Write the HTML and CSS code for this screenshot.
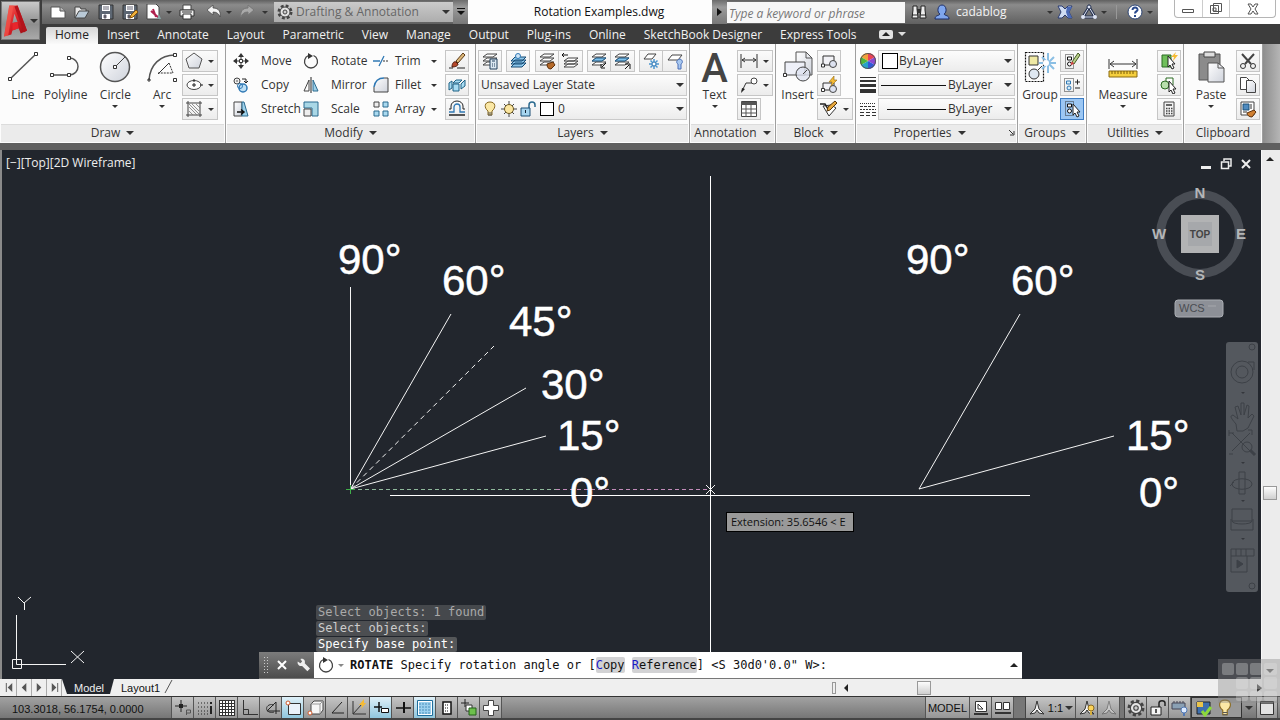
FILE: index.html
```html
<!DOCTYPE html>
<html lang="en">
<head>
  <meta charset="UTF-8" />
  <meta name="viewport" content="width=device-width, initial-scale=1.0"/>
  <title>Rotation Examples.dwg</title>
  <link rel="stylesheet" href="styles.css">
</head>

<body>
  <!-- icon sprite -->
  <svg class="sprite" aria-hidden="true">
    <defs>
      <linearGradient id="g-paper" x1="0" y1="0" x2="1" y2="1"><stop offset="0" stop-color="#fff"/><stop offset="1" stop-color="#cfd3dc"/></linearGradient>
      <linearGradient id="g-red" x1="0" y1="0" x2="1" y2="1"><stop offset="0" stop-color="#ff6a5c"/><stop offset=".5" stop-color="#d81f26"/><stop offset="1" stop-color="#8d0d14"/></linearGradient>
    </defs>
    <symbol id="i-logo" viewBox="0 0 24 32"><path d="M6 1h8l9 24-6 3-2-5-6 2-1 4-7 2zM11 9l-2 9 5-1z" fill="url(#g-red)" fill-rule="evenodd"/><path d="M14 1l9 24-3 2L11 2z" fill="#b3131b"/><path d="M6 1h4L5 30l-4 1z" fill="#f4574c" opacity=".7"/><path d="M9 18l5-1 1 6-6 2z" fill="#e8262c"/></symbol>
    <symbol id="i-new" viewBox="0 0 16 16"><path d="M1 3h9l5 4v7H1z" fill="#fff" stroke="#555"/><path d="M10 3v4h5" fill="#bbb" stroke="#555"/></symbol>
    <symbol id="i-open" viewBox="0 0 16 16"><path d="M1 14V3h5l1 2h5v3" fill="#e8e8e8" stroke="#444"/><path d="M1 14l4-7h10l-4 7z" fill="#b9c9d6" stroke="#444"/></symbol>
    <symbol id="i-save" viewBox="0 0 16 16"><path d="M1 1h14v14H1z" fill="#5d6773" stroke="#333"/><path d="M4 1h8v6H4zM4 10h8v5H4z" fill="#fff"/><path d="M5 3h6M5 5h6M6 11h2v3H6z" stroke="#667" fill="#555"/></symbol>
    <symbol id="i-saveas" viewBox="0 0 16 16"><use href="#i-save"/><path d="M8 14l1-3 5-5 2 2-5 5z" fill="#efb23c" stroke="#85530c"/></symbol>
    <symbol id="i-sheet" viewBox="0 0 16 16"><path d="M1 0h9l3 3v12H1z" fill="#fff" stroke="#444"/><path d="M5 7l8 7M7 5l3 8" stroke="#b0224e" stroke-width="2"/><path d="M13 10l2 5h-4z" fill="#8aa"/></symbol>
    <symbol id="i-print" viewBox="0 0 16 16"><path d="M4 1h8v5H4z" fill="#fff" stroke="#444"/><path d="M1 6h14v6H1z" fill="#eee" stroke="#333"/><path d="M4 10h8v5H4z" fill="#fff" stroke="#333"/><path d="M3 8h10" stroke="#333"/></symbol>
    <symbol id="i-undo" viewBox="0 0 16 16"><path d="M1 6l6-5v3c6 0 8 4 7 9-1-3-3-5-7-5v3z" fill="#f4f4f4" stroke="#444" stroke-width=".7"/></symbol>
    <symbol id="i-redo" viewBox="0 0 16 16"><path d="M15 6L9 1v3c-6 0-8 4-7 9 1-3 3-5 7-5v3z" fill="#aaa" stroke="#777"/></symbol>
    <symbol id="i-gear" viewBox="0 0 16 16"><circle cx="8" cy="8" r="6" fill="none" stroke="#444" stroke-width="3" stroke-dasharray="2.7 2"/><circle cx="8" cy="8" r="5" fill="#e4e4e4" stroke="#444"/><circle cx="8" cy="8" r="2" fill="#ccc" stroke="#444"/></symbol>
    <symbol id="i-binoc" viewBox="0 0 16 16"><path d="M2 2h4v3l1 9H1l1-8zM10 2h4v4l1 8H9l1-9z" fill="#eee" stroke="#222"/><path d="M6 5h4v4H6z" fill="#333"/><path d="M1 11h5M10 11h5" stroke="#222"/></symbol>
    <symbol id="i-user" viewBox="0 0 16 16"><path d="M8 1c5 0 5 8 2 9 1 2 5 1 5 5H1c0-4 4-3 5-5C3 9 3 1 8 1z" fill="#7fa6ee" stroke="#1c2d66"/></symbol>
    <symbol id="i-exch" viewBox="0 0 16 16"><path d="M1 2h4l3 3 3-3h4l-3 6 3 6h-4l-3-3-3 3H1l3-6z" fill="#cfdcf2" stroke="#2b3c72"/><path d="M10 3h5l-3 5 3 6h-4L9 8z" fill="#4a69b5"/></symbol>
    <symbol id="i-a360" viewBox="0 0 16 16"><path d="M8 3L2 13h12z" fill="none" stroke="#273352" stroke-width="3"/><path d="M8 3L2 13h12z" fill="none" stroke="#dfe6f5"/><circle cx="8" cy="3" r="2" fill="#dfe6f5" stroke="#273352"/><circle cx="2" cy="13" r="2" fill="#dfe6f5"/><circle cx="14" cy="13" r="2" fill="#dfe6f5"/></symbol>
    <symbol id="i-help" viewBox="0 0 16 16"><circle cx="8" cy="8" r="7" fill="#fff" stroke="#2a4272"/><path d="M5.500 6c0-3.500 5.500-3 5 0-.3 1.500-2.500 1.500-2.500 3.500M8 11v2" fill="none" stroke="#2a4a8e" stroke-width="2"/></symbol>
    <!-- draw -->
    <symbol id="i-line" viewBox="0 0 32 32"><path d="M3 28L29 3" stroke="#555" stroke-width="1.500"/><path d="M1.500 26.500h3v3h-3zM27.500 1.500h3v3h-3z" fill="#fff" stroke="#333"/></symbol>
    <symbol id="i-pline" viewBox="0 0 32 32"><path d="M2 24h17c12 0 12-17 0-17" fill="none" stroke="#555" stroke-width="1.500"/><path d="M.500 22.500h3v3h-3zM17.500 22.500h3v3h-3zM17.500 5.500h3v3h-3z" fill="#fff" stroke="#333"/></symbol>
    <symbol id="i-circle" viewBox="0 0 32 32"><circle cx="16" cy="16" r="14.500" fill="url(#g-paper)" stroke="#555" stroke-width="1.500"/><path d="M16 16L26 6" stroke="#444"/><path d="M14.500 14.500h3v3h-3z" fill="#fff" stroke="#333"/></symbol>
    <symbol id="i-arc" viewBox="0 0 32 32"><path d="M3 29C4 14 14 4 29 4" fill="none" stroke="#555" stroke-width="1.500"/><path d="M27.500 2.500h3v3h-3zM27.500 27.500h3v3h-3z" fill="#fff" stroke="#333"/><path d="M1 29h4M3 27v4M12 23l11-11" stroke="#333"/><path d="M23 12l4 10H12" fill="none" stroke="#333" stroke-dasharray="2 1"/></symbol>
    <symbol id="i-poly" viewBox="0 0 18 18"><path d="M9 1l8 6-3 9H4L1 7z" fill="url(#g-paper)" stroke="#555"/></symbol>
    <symbol id="i-ellipse" viewBox="0 0 18 18"><ellipse cx="9" cy="9" rx="7" ry="4.500" fill="#fff" stroke="#444"/><path d="M9 7v4M7 9h4M9 3v3M15 9h3" stroke="#222"/></symbol>
    <symbol id="i-hatch" viewBox="0 0 18 18"><path d="M3 1v16M15 1v16M1 3h16M1 15h16" stroke="#444"/><path d="M4 7l8 8M4 4l10 10M7 4l7 7M11 4l4 4M4 11l4 4" stroke="#777" stroke-width=".8"/></symbol>
    <!-- modify -->
    <symbol id="i-move" viewBox="0 0 16 16"><path d="M8 0l3 4H5zM8 16l3-4H5zM0 8l4-3v6zM16 8l-4-3v6z" fill="#333"/><path d="M6.500 6.500h3v3h-3z" fill="#fff" stroke="#333"/><path d="M3 8h3M10 8h3M8 3v3M8 10v3" stroke="#333"/></symbol>
    <symbol id="i-copy" viewBox="0 0 16 16"><circle cx="4" cy="4" r="3" fill="#eee" stroke="#444"/><circle cx="4" cy="4" r="1" fill="#888"/><path d="M9 2h4v3M11 4l2 2 2-2" fill="none" stroke="#222"/><circle cx="10" cy="11" r="4" fill="#bfe0f5" stroke="#2f78b4" stroke-width="1.500"/><circle cx="7" cy="9" r="2.500" fill="none" stroke="#2f78b4"/></symbol>
    <symbol id="i-stretch" viewBox="0 0 16 16"><path d="M1 1h8v14H1z" fill="url(#g-paper)" stroke="#444"/><path d="M9 1h2l4 14H9z" fill="#9ed1ea" stroke="#2b6a8f"/><path d="M4 11h6M8 8.500l3 2.500-3 2.500" fill="none" stroke="#111" stroke-width="1.500"/></symbol>
    <symbol id="i-rotate" viewBox="0 0 16 16"><path d="M10.500 2.500A6.500 6.500 0 1 1 5.500 2.500" fill="none" stroke="#444" stroke-width="1.300"/><path d="M5 0l5 3-5 3z" fill="#333"/></symbol>
    <symbol id="i-mirror" viewBox="0 0 16 16"><path d="M6 3v11H1z" fill="#fff" stroke="#444"/><path d="M10 3v11h5z" fill="#9ed1ea" stroke="#2b6a8f"/><path d="M8 0v16" stroke="#222"/></symbol>
    <symbol id="i-scale" viewBox="0 0 16 16"><path d="M1 1h14v14h-6V7H1z" fill="#a9d7e6" stroke="#2b6a8f"/><path d="M1 8h7v7H1z" fill="#eee" stroke="#444"/></symbol>
    <symbol id="i-trim" viewBox="0 0 16 16"><path d="M0 8h7M6 13L11 3" stroke="#2f78b4" stroke-width="1.300"/><path d="M10 8h6" stroke="#333" stroke-dasharray="2 1"/></symbol>
    <symbol id="i-fillet" viewBox="0 0 16 16"><path d="M1 15C1 6 6 1 15 1v14z" fill="url(#g-paper)"/><path d="M1 10C2 4 6 1 11 1" fill="none" stroke="#2f78b4" stroke-width="1.500"/><path d="M11 1h4v14H1v-5" fill="none" stroke="#444"/></symbol>
    <symbol id="i-array" viewBox="0 0 16 16"><path d="M1 1h5v5H1z" fill="#eee" stroke="#444"/><path d="M10 1h5v5h-5zM1 10h5v5H1zM10 10h5v5h-5z" fill="#aadaf0" stroke="#2b6a8f"/></symbol>
    <symbol id="i-erase" viewBox="0 0 18 18"><path d="M1 16h4M9 16h8" stroke="#222"/><path d="M8 9l7-8 2 2-7 8z" fill="#dcb87a" stroke="#5c3a16"/><path d="M4 15c0-4 2-6 4-5l2 2c0 2-3 3-6 3z" fill="#b5472a" stroke="#4a1a0d"/></symbol>
    <symbol id="i-explode" viewBox="0 0 18 18"><path d="M5 7l3-3h6l-3 3zM5 8h6v7H5zM13 8l4-4v6l-4 3zM1 7l3-2v7l-3 2z" fill="#a9dcf2" stroke="#1c6084"/></symbol>
    <symbol id="i-offset" viewBox="0 0 18 18"><path d="M1 12h5V7a3 3 0 0 1 6 0v5h5" fill="none" stroke="#2f78b4" stroke-width="1.300"/><path d="M1 9h2V6a6 5 0 0 1 12 0v3h2" fill="none" stroke="#222"/><path d="M1 15h16" stroke="#222" stroke-width="1.500"/></symbol>
    <!-- layers -->
    <symbol id="i-layer" viewBox="0 0 18 18"><path d="M6 2h10l-4 3H2zM6 6h10l-4 3H2zM6 10h10l-4 3H2z" fill="#fff" stroke="#444"/></symbol>
    <symbol id="i-layprop" viewBox="0 0 18 18"><use href="#i-layer"/><path d="M9 7h7v10H9z" fill="#dce8f2" stroke="#23415c"/><path d="M11 9h3M11 12h1M13 12h1M11 14h1M13 14h1" stroke="#23415c"/></symbol>
    <symbol id="i-layblue" viewBox="0 0 18 18"><path d="M6 11h11l-4 4H2zM6 8h11l-4 4H2zM6 5h11l-4 4H2z" fill="#8cc6ea" stroke="#174b74"/><circle cx="9" cy="4" r="2.500" fill="#cfe6f8" stroke="#2f78b4"/></symbol>
    <symbol id="i-laymatch" viewBox="0 0 18 18"><use href="#i-layer"/><path d="M9 12l6-2 2 3-4 4c-3 0-4-2-4-5z" fill="#b56a2a" stroke="#5d300c"/></symbol>
    <symbol id="i-layprev" viewBox="0 0 18 18"><path d="M7 6h10l-4 3H3zM7 9h10l-4 3H3zM7 12h10l-4 3H3z" fill="#fff" stroke="#444"/><path d="M7 3H1l2-2M1 3l2 2" fill="none" stroke="#111"/></symbol>
    <symbol id="i-layiso" viewBox="0 0 18 18"><use href="#i-layer"/><path d="M6 6h10l-4 3H2z" fill="#7fc2ec" stroke="#225a86"/><path d="M16 11l-4 4M11 12v4h4" stroke="#111" fill="none"/></symbol>
    <symbol id="i-layuni" viewBox="0 0 18 18"><use href="#i-layer"/><path d="M6 6h10l-4 3H2z" fill="#7fc2ec" stroke="#225a86"/><path d="M12 17l4-4M12 12h5v5" stroke="#111" fill="none"/></symbol>
    <symbol id="i-layfrz" viewBox="0 0 18 18"><path d="M6 2h8l-4 5H2z" fill="#fff" stroke="#444"/><path d="M12 7v10M7 12h10M8.500 8.500l7 7M15.500 8.500l-7 7" stroke="#4c96d0" stroke-width="1.500"/><circle cx="12" cy="12" r="2" fill="#fff" stroke="#2f78b4"/></symbol>
    <symbol id="i-layoff" viewBox="0 0 18 18"><path d="M6 3h10l-4 5H2z" fill="#fff" stroke="#444"/><path d="M14 7c3 1 3 4 1 5v5h-3v-5c-2-1-2-4 2-5z" fill="#a8c8f0" stroke="#4a6fb8"/></symbol>
    <symbol id="i-bulb" viewBox="0 0 16 16"><path d="M8 1c6 0 6 6 2 9v4H6v-4C2 7 2 1 8 1z" fill="#fbe8a6" stroke="#8a6a20"/><path d="M6 12h4M6 14h4" stroke="#555"/></symbol>
    <symbol id="i-sun" viewBox="0 0 16 16"><path d="M8 0v16M0 8h16M3 3l10 10M13 3L3 13" stroke="#444"/><circle cx="8" cy="8" r="4.500" fill="#fbe6a0" stroke="#6d5a20"/></symbol>
    <symbol id="i-unlock" viewBox="0 0 16 16"><path d="M9 8V4c0-4 6-4 6 0v2" fill="none" stroke="#2b6a8f" stroke-width="1.500"/><path d="M1 7h9v8H1z" fill="#a6d5ef" stroke="#1c4f74"/><path d="M5.500 9v3" stroke="#123"/></symbol>
    <!-- annotation, block -->
    <symbol id="i-dim" viewBox="0 0 18 18"><path d="M1 2v14M17 2v14M2 8h14M5 6L2 8l3 2M13 6l3 2-3 2" fill="none" stroke="#333"/></symbol>
    <symbol id="i-leader" viewBox="0 0 18 18"><path d="M2 15L6 7h6" fill="none" stroke="#333"/><circle cx="14" cy="5" r="3" fill="#fff" stroke="#444"/><path d="M1 17l1-5 3 1z" fill="#222"/></symbol>
    <symbol id="i-table" viewBox="0 0 18 18"><path d="M1.500 1.500h15v15h-15z" fill="#fff" stroke="#444"/><path d="M1 2h16v3H1z" fill="#555"/><path d="M1 9h16M1 13h16M6 5v12M11 5v12" stroke="#555"/></symbol>
    <symbol id="i-insert" viewBox="0 0 32 32"><path d="M14 1h10l6 6v17H14z" fill="url(#g-paper)" stroke="#555"/><path d="M24 1v6h6" fill="none" stroke="#555"/><path d="M3 11h20v13H3z" fill="#eef0f8" stroke="#444"/><circle cx="21" cy="23" r="7" fill="#dde2f0" fill-opacity=".8" stroke="#444"/><path d="M21 23l4-4" stroke="#444"/><path d="M1.500 22.500h3v3h-3z" fill="#fff" stroke="#333"/></symbol>
    <symbol id="i-block" viewBox="0 0 18 18"><path d="M3 4h11v9H3z" fill="#f2f2f6" stroke="#333"/><circle cx="13" cy="12" r="3.500" fill="#dde2f0" stroke="#444"/><path d="M1.500 12h3v3h-3z" fill="#fff" stroke="#333"/></symbol>
    <symbol id="i-blockedit" viewBox="0 0 18 18"><path d="M3 7h11v7H3z" fill="#f2f2f6" stroke="#333"/><path d="M1.500 12.500h3v3h-3z" fill="#fff" stroke="#333"/><circle cx="13" cy="13" r="3.500" fill="#dde2f0" stroke="#444"/><path d="M14 0L9 6h3l-1 4 6-6h-3z" fill="#f6bb34" stroke="#8f6410" stroke-width=".6"/></symbol>
    <symbol id="i-attr" viewBox="0 0 18 18"><path d="M3 6l6 10 7-8-5-3z" fill="#fff" stroke="#333"/><path d="M0 4h5l3 5" fill="none" stroke="#222" stroke-width="1.500"/><path d="M7 11l1-4 7-6 2 2-7 7z" fill="#e8a83c" stroke="#553509"/></symbol>
    <!-- properties -->
    <symbol id="i-color" viewBox="0 0 16 16"><path d="M8 8V0A8 8 0 0 0 1 4z" fill="#f2a03a"/><path d="M8 8V0a8 8 0 0 1 7 4z" fill="#ea4256"/><path d="M8 8l7-4a8 8 0 0 1 0 8z" fill="#8a4ad0"/><path d="M8 8l7 4a8 8 0 0 1-7 4z" fill="#3158d8"/><path d="M8 8v8a8 8 0 0 1-7-4z" fill="#26a2c8"/><path d="M8 8l-7 4a8 8 0 0 1 0-8z" fill="#4fb53c"/><circle cx="8" cy="8" r="7.500" fill="none" stroke="#555"/></symbol>
    <symbol id="i-lweight" viewBox="0 0 16 16"><path d="M0 0h16v1H0zM0 3h16v2H0zM0 7h16v3H0zM0 12h16v4H0z" fill="#333"/></symbol>
    <symbol id="i-ltype" viewBox="0 0 16 16"><path d="M0 2.500h16" stroke="#333" stroke-dasharray="1 1"/><path d="M0 5.500h16" stroke="#333" stroke-dasharray="3 1"/><path d="M0 8.500h16" stroke="#333" stroke-dasharray="2 1"/><path d="M0 11.500h16M0 14.500h16" stroke="#333" stroke-dasharray="4 2"/></symbol>
    <!-- groups, utilities, clipboard -->
    <symbol id="i-group" viewBox="0 0 32 32"><path d="M1.500 1.500h18v29h-18z" fill="none" stroke="#111" stroke-width="1.200" stroke-dasharray="2 1"/><path d="M5 5h9v9H5z" fill="#efe9a4" stroke="#333"/><path d="M24 2v20M15 12h17M18 6l12 12M30 6L18 18" stroke="#8bbfe4" stroke-width="2"/><circle cx="22" cy="12" r="3" fill="#fff"/><circle cx="10" cy="23" r="5" fill="#dfe8f2" stroke="#333"/><path d="M14 19l4-4" stroke="#333"/></symbol>
    <symbol id="i-ungroup" viewBox="0 0 18 18"><path d="M2.500 2.500h8v14h-8z" fill="none" stroke="#333" stroke-dasharray="1 1"/><path d="M4.500 5h4v3h-4z" fill="#fff" stroke="#111"/><circle cx="6.500" cy="12" r="2" fill="#fff" stroke="#111"/><path d="M9 10l6-9 2 2-6 9z" fill="#b9d08a" stroke="#445a22"/><path d="M8 13c-1-2 1-4 2-3l1 2z" fill="#c44"/></symbol>
    <symbol id="i-grpedit" viewBox="0 0 18 18"><path d="M1.500 2.500h9v13h-9z" fill="none" stroke="#333" stroke-dasharray="1 1"/><path d="M3.500 5h4v3h-4z" fill="#d6ecf8" stroke="#2f78b4"/><circle cx="6" cy="12" r="2" fill="#d6ecf8" stroke="#2f78b4"/><path d="M12 6h5M14.500 3.500v5M12 12h5" stroke="#222"/></symbol>
    <symbol id="i-grpsel" viewBox="0 0 18 18"><path d="M2.500 1.500h8v14h-8z" fill="none" stroke="#333" stroke-dasharray="1 1"/><path d="M4.500 4h4v3h-4z" fill="#fff" stroke="#111"/><circle cx="6.500" cy="11" r="2" fill="#fff" stroke="#111"/><path d="M10 4v11l2-2 2 4 2-1-2-4h3z" fill="#fff" stroke="#222"/></symbol>
    <symbol id="i-measure" viewBox="0 0 32 32"><path d="M2 8v10M30 8v10M3 13h26M7 10l-4 3 4 3M25 10l4 3-4 3" fill="none" stroke="#333"/><path d="M2 20h28v6H2z" fill="#f5cf3e" stroke="#8a6a10"/><path d="M5 20v3M8 20v3M11 20v3M14 20v3M17 20v3M20 20v3M23 20v3M26 20v3" stroke="#7a5c08"/></symbol>
    <symbol id="i-qselect" viewBox="0 0 18 18"><path d="M2 3h9v12H2z" fill="#6fbf5a" stroke="#2a6a22"/><path d="M8 4v11l2-2 2 4 2-1-2-4h3z" fill="#fff" stroke="#222"/><path d="M16 0l-5 5h3l-1 4 5-6h-3z" fill="#f6bb34"/></symbol>
    <symbol id="i-select" viewBox="0 0 18 18"><path d="M6 2h7v7H6z" fill="#fff" stroke="#2a6a22"/><circle cx="5" cy="9" r="4" fill="#b8dfac" stroke="#2a6a22"/><path d="M9 5v11l2-2 2 4 2-1-2-4h3z" fill="#fff" stroke="#222"/></symbol>
    <symbol id="i-calc" viewBox="0 0 18 18"><path d="M4 2h10v14H4z" fill="#f2f2f2" stroke="#444"/><path d="M6 4h6v2H6z" fill="#666"/><path d="M6 8.500h7M6 11h7M6 13.500h7" stroke="#444" stroke-width="1.500" stroke-dasharray="1.500 1"/></symbol>
    <symbol id="i-paste" viewBox="0 0 32 32"><path d="M4 3h21v26H4z" fill="#8b8b8b" stroke="#555"/><path d="M9 1h11v5H9z" fill="#ddd" stroke="#444"/><path d="M13 12h10l6 5v14H13z" fill="url(#g-paper)" stroke="#555"/><path d="M23 12v5h6" fill="none" stroke="#555"/></symbol>
    <symbol id="i-cut" viewBox="0 0 18 18"><path d="M3 2l9 10M15 2L6 12" stroke="#444" stroke-width="2"/><circle cx="4" cy="14" r="2.500" fill="none" stroke="#333"/><circle cx="14" cy="14" r="2.500" fill="none" stroke="#333"/></symbol>
    <symbol id="i-dup" viewBox="0 0 18 18"><path d="M1.500 1.500h6l3 3v9h-9z" fill="#fff" stroke="#444"/><path d="M7.500 4.500h6l3 3v9h-9z" fill="url(#g-paper)" stroke="#444"/></symbol>
    <symbol id="i-matchprop" viewBox="0 0 18 18"><path d="M2 2h13v13H2z" fill="#fff" stroke="#444"/><path d="M4 4h6v6H4z" fill="#4f8bc0" stroke="#1c4f74"/><path d="M12 4v5M4 12h4" stroke="#333"/><path d="M8 13l7-3 2 2-4 5c-3 0-5-2-5-4z" fill="#d08032" stroke="#5d300c"/></symbol>
    <!-- command line and status bar -->
    <symbol id="i-wrench" viewBox="0 0 16 16"><path d="M2 4l3 2 2-2-2-3c4-1 6 2 5 5l6 6-3 3-6-6c-3 1-6-2-5-5z" fill="#eee"/></symbol>
    <symbol id="i-infer" viewBox="0 0 18 18"><path d="M7 1v12M1 7h12" stroke="#222"/><path d="M5 5h4v4H5z" fill="#222"/><path d="M12.500 16V11h4v3h-4" fill="none" stroke="#555"/></symbol>
    <symbol id="i-snap" viewBox="0 0 18 18"><path d="M2 4h10M2 8h10M2 12h10M2 15h10" stroke="#222" stroke-dasharray="1 2"/><path d="M15 3v2M15 7v8" stroke="#222" stroke-width="2"/></symbol>
    <symbol id="i-grid" viewBox="0 0 18 18"><path d="M1 1h16v16H1z" fill="#fff"/><path d="M1.500 1v16M4.500 1v16M7.500 1v16M10.500 1v16M13.500 1v16M16.500 1v16M1 1.500h16M1 4.500h16M1 7.500h16M1 10.500h16M1 13.500h16M1 16.500h16" stroke="#333"/></symbol>
    <symbol id="i-ortho" viewBox="0 0 18 18"><path d="M3.500 1v14.500H18M3.500 10.500h5v5" fill="none" stroke="#333"/></symbol>
    <symbol id="i-polar" viewBox="0 0 18 18"><path d="M5 12L14 3v12M5 12h13" fill="none" stroke="#222"/><path d="M12 6a5 4 0 1 0 0 7" fill="none" stroke="#333"/></symbol>
    <symbol id="i-osnap" viewBox="0 0 18 18"><path d="M4.500 4.500h12v11h-12z" fill="#eaf2fa" stroke="#333"/><circle cx="4" cy="4" r="2" fill="#fff" stroke="#d0582a"/></symbol>
    <symbol id="i-osnap3" viewBox="0 0 18 18"><path d="M5 5l3-3h9v9l-3 4H5z" fill="#f6f6f6" stroke="#444"/><path d="M5 5h9v10M14 5l3-3" fill="none" stroke="#999"/><circle cx="4" cy="14" r="2" fill="#fff" stroke="#d0582a"/></symbol>
    <symbol id="i-otrack" viewBox="0 0 18 18"><path d="M14 3L4 14h12" fill="none" stroke="#222"/></symbol>
    <symbol id="i-ducs" viewBox="0 0 18 18"><path d="M3 2v13h13M3 15L12 5" fill="none" stroke="#333"/><path d="M14 0l-5 6h3l-1 4 5-6h-2z" fill="#f6bb34"/></symbol>
    <symbol id="i-dyn" viewBox="0 0 18 18"><path d="M7 3v10M2 8h8" stroke="#111" stroke-width="1.500"/><path d="M9.500 9.500h7v4h-7z" fill="#fff" stroke="#111"/></symbol>
    <symbol id="i-lwt" viewBox="0 0 18 18"><path d="M2 9h15" stroke="#111" stroke-width="1.500"/><path d="M10 3v11" stroke="#111" stroke-width="2"/></symbol>
    <symbol id="i-tpy" viewBox="0 0 18 18"><path d="M1.500 1.500h15v15h-15z" fill="#fff" stroke="#1f6e9c"/><path d="M3 3h12v12H3z" fill="#9bd0ee"/><path d="M3 5h12M3 8h12M3 11h12M3 14h12" stroke="#4a90bc" stroke-dasharray="2 1"/></symbol>
    <symbol id="i-qp" viewBox="0 0 18 18"><path d="M5 3h8v12H5z" fill="#fff" stroke="#111" stroke-width="1.500"/><path d="M7 6h4M7 9h4M7 12h4" stroke="#111" stroke-dasharray="1 1"/></symbol>
    <symbol id="i-sc" viewBox="0 0 18 18"><path d="M5 0v8M1 4h8" stroke="#222"/><path d="M6 6h6v6H6z" fill="#fff" stroke="#333"/><path d="M9 9h7v7H9z" fill="#6dbf4c" stroke="#24611a"/></symbol>
    <symbol id="i-am" viewBox="0 0 18 18"><path d="M6.500 1.500h5v5h5v5h-5v5h-5v-5h-5v-5h5z" fill="#fff" stroke="#444"/></symbol>
    <symbol id="i-paper" viewBox="0 0 18 18"><path d="M3.500 2.500h11v10h-11z" fill="#fff" stroke="#333"/><path d="M6 5v5h5z" fill="none" stroke="#333"/><path d="M2 15h14" stroke="#333" stroke-width="2"/></symbol>
    <symbol id="i-qview" viewBox="0 0 18 18"><path d="M1.500 3.500h6v7h-6zM9.500 3.500h6v7h-6z" fill="#fff" stroke="#333"/><path d="M1 14h16" stroke="#333" stroke-width="2"/></symbol>
    <symbol id="i-annoscale" viewBox="0 0 18 18"><path d="M9 2l2 8 5 5-5-1-2-3-2 3-5 1 5-5z" fill="#f4f4f4" stroke="#333"/></symbol>
    <symbol id="i-annovis" viewBox="0 0 18 18"><use href="#i-annoscale"/><circle cx="13" cy="9" r="3" fill="#fbd35a" stroke="#8a6a20"/><path d="M12 12h2v4h-2z" fill="#d8b040"/></symbol>
    <symbol id="i-lock" viewBox="0 0 18 18"><path d="M10 8V4c0-3 6-3 6 0v3" fill="none" stroke="#222" stroke-width="1.500"/><path d="M2 8h10v8H2z" fill="#f4f4f4" stroke="#222"/><path d="M7 10v4" stroke="#222" stroke-width="1.500"/></symbol>
    <symbol id="i-hw" viewBox="0 0 18 18"><path d="M1 4h13v6H1z" fill="#8aa0b4" stroke="#445"/><path d="M3 2v2M6 2v2M9 2v2M12 2v2" stroke="#445"/><circle cx="13" cy="11" r="3" fill="#dceaff" stroke="#5279b5"/><path d="M12 14h2v3h-2z" fill="#5279b5"/></symbol>
    <symbol id="i-iso" viewBox="0 0 18 18"><path d="M2 3h13v12H2z" fill="#3d6fae" stroke="#222"/><path d="M2 3h6v5H2z" fill="#e8c34a"/><path d="M7 12l3 4 6-8" fill="none" stroke="#8cd83c" stroke-width="3"/></symbol>
    <symbol id="i-clean" viewBox="0 0 18 18"><path d="M2.500 2.500h13v13h-13z" fill="#e2e2e2" stroke="#333"/><path d="M3 3h12v2H3z" fill="#666"/></symbol>
  </svg>

  <header class="app-header">
    <button class="app-button" aria-label="Application menu"><svg class="logo"><use href="#i-logo"/></svg><i class="caret"></i></button>

    <div class="title-row">
      <div class="quick-access">
        <button class="tool" aria-label="New"><svg><use href="#i-new"/></svg></button>
        <button class="tool" aria-label="Open"><svg><use href="#i-open"/></svg></button>
        <button class="tool" aria-label="Save"><svg><use href="#i-save"/></svg></button>
        <button class="tool" aria-label="Save as"><svg><use href="#i-saveas"/></svg></button>
        <button class="tool" aria-label="Sheet set"><svg><use href="#i-sheet"/></svg></button>
        <i class="caret tiny"></i>
        <button class="tool wide" aria-label="Plot"><svg><use href="#i-print"/></svg></button>
        <button class="tool" aria-label="Undo"><svg><use href="#i-undo"/></svg></button>
        <i class="caret tiny"></i>
        <button class="tool wide" aria-label="Redo"><svg><use href="#i-redo"/></svg></button>
        <i class="caret tiny"></i>
      </div>
      <label class="workspace"><svg><use href="#i-gear"/></svg>
        <select aria-label="Workspace"><option>Drafting &amp; Annotation</option></select><i class="caret"></i>
      </label>
      <button class="bar-button" aria-label="Customize"><svg viewBox="0 0 10 10"><path d="M1 1h8v1H1zM1 4h8L5 8z" fill="#111"/></svg></button>
      <h1 class="doc-title">Rotation Examples.dwg</h1>
      <button class="bar-button" aria-label="Search toggle"><i class="caret right"></i></button>
      <input class="search" type="text" placeholder="Type a keyword or phrase" aria-label="Search">
      <div class="account">
        <button class="tool" aria-label="Find"><svg><use href="#i-binoc"/></svg></button>
        <button class="user"><svg><use href="#i-user"/></svg>cadablog</button>
        <i class="caret tiny"></i>
        <button class="tool" aria-label="Exchange"><svg><use href="#i-exch"/></svg></button>
        <button class="tool" aria-label="Autodesk 360"><svg><use href="#i-a360"/></svg></button>
        <i class="caret tiny"></i>
        <span class="divider"></span>
        <button class="tool" aria-label="Help"><svg><use href="#i-help"/></svg></button>
        <i class="caret tiny"></i>
      </div>
      <div class="window-area">
        <div class="window-buttons">
          <button aria-label="Minimize"><svg viewBox="0 0 14 14"><path d="M1.500 7.500h11v3h-11z" fill="#fff" stroke="#555"/></svg></button>
          <button aria-label="Restore"><svg viewBox="0 0 14 14"><path d="M4.500 1.500h8v8h-8zM1.500 3.500h8v8h-8zM4 6h3v3H4z" fill="#fff" stroke="#555"/></svg></button>
          <button class="close" aria-label="Close"><svg viewBox="0 0 14 14"><path d="M2 2h3l2 3 2-3h3L9 7l3 5H9L7 9l-2 3H2l3-5z" fill="#fff" stroke="#555"/></svg></button>
        </div>
      </div>
    </div>

    <nav class="tabs">
      <a class="active" href="#">Home</a>
      <a href="#">Insert</a>
      <a href="#">Annotate</a>
      <a href="#">Layout</a>
      <a href="#">Parametric</a>
      <a href="#">View</a>
      <a href="#">Manage</a>
      <a href="#">Output</a>
      <a href="#">Plug-ins</a>
      <a href="#">Online</a>
      <a href="#">SketchBook Designer</a>
      <a href="#">Express Tools</a>
      <button class="ribbon-toggle" aria-label="Minimize ribbon"><span class="pill"><i class="caret up"></i></span><i class="caret light"></i></button>
    </nav>
  </header>

  <div class="ribbon">
    <section class="panel">
      <div class="panel-body draw">
        <button class="big"><svg><use href="#i-line"/></svg>Line</button>
        <button class="big"><svg><use href="#i-pline"/></svg>Polyline</button>
        <button class="big"><svg><use href="#i-circle"/></svg>Circle<i class="caret tiny"></i></button>
        <button class="big"><svg><use href="#i-arc"/></svg>Arc<i class="caret tiny"></i></button>
        <div class="small-col">
          <button class="small split" aria-label="Polygon"><svg><use href="#i-poly"/></svg><i class="caret tiny"></i></button>
          <button class="small split" aria-label="Ellipse"><svg><use href="#i-ellipse"/></svg><i class="caret tiny"></i></button>
          <button class="small split" aria-label="Hatch"><svg><use href="#i-hatch"/></svg><i class="caret tiny"></i></button>
        </div>
      </div>
      <h2>Draw<i class="caret"></i></h2>
    </section>

    <section class="panel">
      <div class="panel-body modify">
        <button class="row-tool"><svg><use href="#i-move"/></svg>Move</button>
        <button class="row-tool"><svg><use href="#i-rotate"/></svg>Rotate</button>
        <button class="row-tool menu"><svg><use href="#i-trim"/></svg>Trim<i class="caret tiny"></i></button>
        <button class="small" aria-label="Erase"><svg><use href="#i-erase"/></svg></button>
        <button class="row-tool"><svg><use href="#i-copy"/></svg>Copy</button>
        <button class="row-tool"><svg><use href="#i-mirror"/></svg>Mirror</button>
        <button class="row-tool menu"><svg><use href="#i-fillet"/></svg>Fillet<i class="caret tiny"></i></button>
        <button class="small" aria-label="Explode"><svg><use href="#i-explode"/></svg></button>
        <button class="row-tool"><svg><use href="#i-stretch"/></svg>Stretch</button>
        <button class="row-tool"><svg><use href="#i-scale"/></svg>Scale</button>
        <button class="row-tool menu"><svg><use href="#i-array"/></svg>Array<i class="caret tiny"></i></button>
        <button class="small" aria-label="Offset"><svg><use href="#i-offset"/></svg></button>
      </div>
      <h2>Modify<i class="caret"></i></h2>
    </section>

    <section class="panel">
      <div class="panel-body stack">
        <div class="button-row">
          <button class="small" aria-label="Layer properties"><svg><use href="#i-layprop"/></svg></button>
          <button class="small" aria-label="Make current"><svg><use href="#i-layblue"/></svg></button>
          <div class="pair">
            <button class="small" aria-label="Match layer"><svg><use href="#i-laymatch"/></svg></button>
            <button class="small" aria-label="Previous layer"><svg><use href="#i-layprev"/></svg></button>
          </div>
          <div class="pair">
            <button class="small" aria-label="Isolate"><svg><use href="#i-layiso"/></svg></button>
            <button class="small" aria-label="Unisolate"><svg><use href="#i-layuni"/></svg></button>
          </div>
          <div class="pair">
            <button class="small" aria-label="Freeze"><svg><use href="#i-layfrz"/></svg></button>
            <button class="small" aria-label="Layer off"><svg><use href="#i-layoff"/></svg></button>
          </div>
        </div>
        <label class="combo"><select aria-label="Layer state"><option>Unsaved Layer State</option></select><i class="caret"></i></label>
        <label class="combo layer"><svg><use href="#i-bulb"/></svg><svg><use href="#i-sun"/></svg><svg><use href="#i-unlock"/></svg><span class="swatch"></span><select aria-label="Layer"><option>0</option></select><i class="caret"></i></label>
      </div>
      <h2>Layers<i class="caret"></i></h2>
    </section>

    <section class="panel">
      <div class="panel-body">
        <button class="big"><span class="letter">A</span>Text<i class="caret tiny"></i></button>
        <div class="small-col">
          <button class="small split" aria-label="Dimension"><svg><use href="#i-dim"/></svg><i class="caret tiny"></i></button>
          <button class="small split" aria-label="Leader"><svg><use href="#i-leader"/></svg><i class="caret tiny"></i></button>
          <button class="small" aria-label="Table"><svg><use href="#i-table"/></svg></button>
        </div>
      </div>
      <h2>Annotation<i class="caret"></i></h2>
    </section>

    <section class="panel">
      <div class="panel-body">
        <button class="big"><svg><use href="#i-insert"/></svg>Insert</button>
        <div class="small-col">
          <button class="small" aria-label="Create block"><svg><use href="#i-block"/></svg></button>
          <button class="small" aria-label="Edit block"><svg><use href="#i-blockedit"/></svg></button>
          <button class="small split" aria-label="Edit attributes"><svg><use href="#i-attr"/></svg><i class="caret tiny"></i></button>
        </div>
      </div>
      <h2>Block<i class="caret"></i></h2>
    </section>

    <section class="panel">
      <div class="panel-body stack">
        <div class="prop"><svg><use href="#i-color"/></svg><label class="combo"><span class="swatch large"></span><select aria-label="Color"><option>ByLayer</option></select><i class="caret"></i></label></div>
        <div class="prop"><svg><use href="#i-lweight"/></svg><label class="combo"><span class="sample"></span><select aria-label="Lineweight"><option>ByLayer</option></select><i class="caret"></i></label></div>
        <div class="prop"><svg><use href="#i-ltype"/></svg><label class="combo"><span class="sample inset"></span><select aria-label="Linetype"><option>ByLayer</option></select><i class="caret"></i></label></div>
      </div>
      <h2 class="with-launcher"><span>Properties<i class="caret"></i></span><svg class="launcher" viewBox="0 0 8 8"><path d="M1 1l4 4M6 2v4H2" fill="none" stroke="#333"/></svg></h2>
    </section>

    <section class="panel">
      <div class="panel-body">
        <button class="big"><svg><use href="#i-group"/></svg>Group</button>
        <div class="small-col">
          <button class="small" aria-label="Ungroup"><svg><use href="#i-ungroup"/></svg></button>
          <button class="small" aria-label="Group edit"><svg><use href="#i-grpedit"/></svg></button>
          <button class="small on" aria-label="Group selection"><svg><use href="#i-grpsel"/></svg></button>
        </div>
      </div>
      <h2>Groups<i class="caret"></i></h2>
    </section>

    <section class="panel">
      <div class="panel-body">
        <button class="big"><svg><use href="#i-measure"/></svg>Measure<i class="caret tiny"></i></button>
        <div class="small-col">
          <button class="small" aria-label="Quick select"><svg><use href="#i-qselect"/></svg></button>
          <button class="small" aria-label="Select all"><svg><use href="#i-select"/></svg></button>
          <button class="small" aria-label="Calculator"><svg><use href="#i-calc"/></svg></button>
        </div>
      </div>
      <h2>Utilities<i class="caret"></i></h2>
    </section>

    <section class="panel">
      <div class="panel-body">
        <button class="big"><svg><use href="#i-paste"/></svg>Paste<i class="caret tiny"></i></button>
        <div class="small-col">
          <button class="small" aria-label="Cut"><svg><use href="#i-cut"/></svg></button>
          <button class="small" aria-label="Copy clip"><svg><use href="#i-dup"/></svg></button>
          <button class="small" aria-label="Match properties"><svg><use href="#i-matchprop"/></svg></button>
        </div>
      </div>
      <h2>Clipboard</h2>
    </section>
    <div class="ribbon-end"></div>
  </div>

  <main class="workarea">
    <div class="viewport">
      <svg class="drawing" viewBox="2 150 1259 529" preserveAspectRatio="xMinYMin meet">
        <g class="geometry">
          <path d="M350.500 287V489M350.500 489L451 314M350.500 489L526 388M350.500 489L546 436M919 489l101-175M919 489l195-53"/>
          <path d="M350.500 489L494 346" stroke-dasharray="5 4"/>
          <path d="M351 489.500H556" class="track green"/>
          <path d="M556 489.500H710" class="track pink"/>
          <path d="M346 489.500h9M350.500 485v9" stroke="#3fae4a"/>
          <path d="M710.500 176V652M390 495.500H1030" class="crosshair"/>
          <path d="M706 485l9 9M715 485l-9 9"/>
        </g>
        <g class="angles">
          <text x="338" y="274">90°</text>
          <text x="442" y="295">60°</text>
          <text x="509" y="336">45°</text>
          <text x="541" y="399">30°</text>
          <text x="557" y="450">15°</text>
          <text x="570" y="507">0°</text>
          <text x="906" y="274">90°</text>
          <text x="1011" y="295">60°</text>
          <text x="1126" y="450">15°</text>
          <text x="1139" y="507">0°</text>
        </g>
        <g class="ucs">
          <path d="M16.500 615v49.500H66M12.500 659.500h9v9h-9z"/>
          <path d="M18 597l6 6 7-6M24.500 603v7M71 651l13 12M84 651L71 663"/>
        </g>
      </svg>
      <p class="view-label">[−][Top][2D Wireframe]</p>
      <div class="doc-buttons">
        <button aria-label="Minimize drawing"><svg viewBox="0 0 12 12"><path d="M1 8h10v3H1z" fill="#eee"/></svg></button>
        <button aria-label="Restore drawing"><svg viewBox="0 0 12 12"><path d="M4 3V1h7v7H9M1.500 4h7v6.500h-7z" fill="none" stroke="#eee" stroke-width="1.500"/></svg></button>
        <button aria-label="Close drawing"><svg viewBox="0 0 12 12"><path d="M2 2l8 8M10 2l-8 8" stroke="#eee" stroke-width="2"/></svg></button>
      </div>
      <svg class="viewcube" viewBox="0 0 100 140">
        <circle cx="50" cy="53" r="39.500" fill="none" stroke="#494d54" stroke-width="9"/>
        <path d="M31 34h38v38H31z" fill="#b2b3b4"/><path d="M38 41h24v24H38z" fill="#a6a8ab"/>
        <text class="face" x="50" y="57">TOP</text>
        <text x="50" y="17">N</text><text x="50" y="99">S</text><text x="9" y="58">W</text><text x="91" y="58">E</text>
        <rect x="25" y="119" width="48" height="17" rx="3" fill="#8d9097" stroke="#aaadb3"/>
        <text class="wcs" x="29" y="131">WCS</text>
        <path d="M58 125h8" stroke="#a6a8ad"/>
      </svg>
      <svg class="navbar" viewBox="0 0 32 250">
        <rect width="32" height="250" rx="3" fill="#54585e"/>
        <g fill="none" stroke="#3d4147">
          <circle cx="26" cy="5" r="3"/><circle cx="26" cy="244" r="3"/>
          <circle cx="16" cy="30" r="11"/><circle cx="16" cy="30" r="6"/><path d="M22 20h6v8"/>
          <path d="M10 82c-6-7-6-8-3-9l5 4-3-12 3-1 3 9V61h3v12l3-10 2 1-1 12 4-4 2 2-6 12-5 3h-6z"/>
          <path d="M6 91l20 20M6 109L24 91M3 91h5M3 88v6M22 88h4v5M3 112h4"/><circle cx="21" cy="105" r="5"/><path d="M24 108l5 5" stroke-width="3"/>
          <path d="M13 130h6v22h-6zM6 142c0-7 20-7 20 0s-20 7-20 0M4 144l4-4"/>
          <path d="M6 167h20v12H6zM6 179c0 4 20 4 20 0M5 177v11h22v-11"/>
          <path d="M5 207h23v7H5zM5 214v16h16v-16M10 207v7M15 207v7M20 207v7"/><path d="M11 218l6 4-6 4z" fill="#3d4147"/>
        </g>
        <path d="M15 50h4l-2 2zM15 120h4l-2 2zM15 158h4l-2 2zM15 196h4l-2 2z" fill="#34373c"/>
      </svg>
      <div class="tooltip">Extension: 35.6546 &lt; E</div>

      <div class="command">
        <div class="history">
          <p>Select objects: 1 found</p>
          <p>Select objects:</p>
          <p>Specify base point:</p>
        </div>
        <div class="command-bar">
          <div class="command-tools">
            <span class="grip"></span>
            <button aria-label="Close command line"><svg viewBox="0 0 12 12"><path d="M2 2l8 8M10 2l-8 8" stroke="#fff" stroke-width="2"/></svg></button>
            <button aria-label="Customize command line"><svg class="wrench"><use href="#i-wrench"/></svg></button>
          </div>
          <svg class="command-icon"><use href="#i-rotate"/></svg><i class="caret tiny pale"></i>
          <p class="prompt"><b>ROTATE</b> Specify rotation angle or [<a href="#"><em>C</em>opy</a> <a href="#"><em>R</em>eference</a>] &lt;S 30d0'0.0" W&gt;:</p>
          <i class="caret up"></i>
        </div>
      </div>
    </div>
    <div class="vscroll"><i class="caret up"></i><span class="thumb"></span><i class="caret"></i></div>
  </main>

  <div class="layout-row">
    <div class="tab-nav">
      <button aria-label="First"><svg viewBox="0 0 12 12"><path d="M2 1h1v10H2zM9 1v10L4 6z"/></svg></button>
      <button aria-label="Previous"><svg viewBox="0 0 12 12"><path d="M8 1v10L3 6z"/></svg></button>
      <button aria-label="Next"><svg viewBox="0 0 12 12"><path d="M3 1v10l5-5z"/></svg></button>
      <button aria-label="Last"><svg viewBox="0 0 12 12"><path d="M9 1h1v10H9zM3 1v10l5-5z"/></svg></button>
    </div>
    <a class="layout-tab current" href="#">Model</a>
    <a class="layout-tab" href="#">Layout1</a>
    <svg class="slash" viewBox="0 0 10 18"><path d="M1 14L8 1" stroke="#555"/></svg>
    <div class="hscroll"><span class="handle"></span><i class="caret left"></i><span class="thumb"></span><i class="caret right"></i></div>
  </div>

  <footer class="status">
    <span class="coords">103.3018, 56.1754, 0.0000</span>
    <div class="toggles">
      <button aria-label="Infer constraints"><svg><use href="#i-infer"/></svg></button>
      <button aria-label="Snap"><svg><use href="#i-snap"/></svg></button>
      <button aria-label="Grid"><svg><use href="#i-grid"/></svg></button>
      <button aria-label="Ortho"><svg><use href="#i-ortho"/></svg></button>
      <button aria-label="Polar"><svg><use href="#i-polar"/></svg></button>
      <button class="on" aria-label="Object snap"><svg><use href="#i-osnap"/></svg></button>
      <button aria-label="3D object snap"><svg><use href="#i-osnap3"/></svg></button>
      <button aria-label="Object tracking"><svg><use href="#i-otrack"/></svg></button>
      <button aria-label="Dynamic UCS"><svg><use href="#i-ducs"/></svg></button>
      <button class="on" aria-label="Dynamic input"><svg><use href="#i-dyn"/></svg></button>
      <button aria-label="Lineweight"><svg><use href="#i-lwt"/></svg></button>
      <button class="on" aria-label="Transparency"><svg><use href="#i-tpy"/></svg></button>
      <button aria-label="Quick properties"><svg><use href="#i-qp"/></svg></button>
      <button aria-label="Selection cycling"><svg><use href="#i-sc"/></svg></button>
      <button aria-label="Annotation monitor"><svg><use href="#i-am"/></svg></button>
    </div>
    <div class="toggles end">
      <button class="text">MODEL</button>
      <button aria-label="Layout"><svg><use href="#i-paper"/></svg></button>
      <button aria-label="Quick view"><svg><use href="#i-qview"/></svg></button>
      <span class="gap"></span>
      <button class="scale"><svg><use href="#i-annoscale"/></svg>1:1<i class="caret"></i></button>
      <button aria-label="Annotation visibility"><svg><use href="#i-annovis"/></svg></button>
      <button class="dim" aria-label="Auto scale"><svg><use href="#i-annoscale"/></svg></button>
      <span class="gap thin"></span>
      <button aria-label="Workspace switching"><svg><use href="#i-gear"/></svg></button>
      <button aria-label="Lock"><svg><use href="#i-lock"/></svg></button>
      <button aria-label="Hardware acceleration"><svg><use href="#i-hw"/></svg></button>
      <div class="tray"><svg><use href="#i-iso"/></svg><svg><use href="#i-bulb"/></svg></div>
      <i class="caret"></i>
      <button class="clean" aria-label="Clean screen"><svg><use href="#i-clean"/></svg></button>
    </div>
  </footer>

  <svg class="watermark" viewBox="0 0 62 44" aria-hidden="true">
    <path d="M0 0h62v44H0z" fill="#8a8a8a" opacity=".4"/>
    <g fill="#e8e8e8" opacity=".3">
      <rect x="4" y="4" width="12" height="12" rx="2"/><rect x="18" y="4" width="12" height="12" rx="2"/><rect x="32" y="4" width="12" height="12" rx="2"/><rect x="46" y="4" width="13" height="12" rx="2"/>
      <rect x="18" y="18" width="12" height="12" rx="2"/><rect x="32" y="18" width="12" height="12" rx="2"/><rect x="46" y="18" width="13" height="12" rx="2"/>
      <rect x="18" y="32" width="12" height="10" rx="2"/><rect x="32" y="32" width="12" height="10" rx="2"/><rect x="46" y="32" width="13" height="10" rx="2"/>
    </g>
  </svg>
</body>
</html>
```
FILE: styles.css
```css
:root {
  --bar-dark: #3c3c3c;
  --text: #333;
  --canvas: #22262d;
  --font: 'Open Sans', 'Noto Sans', sans-serif;
  --mono: 'DejaVu Sans Mono', monospace;
}

* {
  box-sizing: border-box;
}

body {
  margin: 0;
  height: 100vh;
  display: flex;
  flex-direction: column;
  overflow: hidden;
  font-family: var(--font);
  font-size: 12px;
  line-height: 16px;
  color: var(--text);
  background: #5c5c5c;
}

h1, h2, p {
  margin: 0;
  font-size: inherit;
  font-weight: normal;
}

button, select, input {
  font: inherit;
  color: inherit;
  border: 0;
  padding: 0;
  margin: 0;
  background: none;
}

select {
  appearance: none;
  flex: 1;
  min-width: 0;
}

a {
  color: inherit;
  text-decoration: none;
}

svg {
  display: block;
  width: 16px;
  height: 16px;
  flex: none;
}

.sprite {
  width: 0;
  height: 0;
  position: absolute;
}

/* small triangles next to menus */
.caret {
  flex: none;
  width: 0;
  height: 0;
  border: 4px solid transparent;
  border-top: 4px solid #333;
  border-bottom: 0;
}

.caret.tiny {
  border-width: 3px 3px 0;
}

.caret.pale {
  border-top-color: #888;
}

.caret.up {
  border-top: 0;
  border-bottom: 4px solid #222;
}

.caret.right {
  border: 4px solid transparent;
  border-left: 5px solid #111;
  border-right: 0;
}

.caret.left {
  border: 4px solid transparent;
  border-right: 4px solid #222;
  border-left: 0;
}

.caret.light {
  border-top-color: #ddd;
}

/* header */
.app-header {
  display: grid;
  grid-template-columns: 42px 1fr;
  grid-template-rows: 24px 20px;
  background: var(--bar-dark);
}

.app-button {
  grid-row: 1 / 3;
  display: flex;
  align-items: center;
  justify-content: center;
  gap: 2px;
  margin: 1px 2px 4px 1px;
  border: 1px solid #777;
  background: linear-gradient(#c9c9c9, #8e8e8e 60%, #a9a9a9);
}

.logo {
  width: 25px;
  height: 34px;
}

.title-row {
  display: flex;
  align-items: stretch;
  background: linear-gradient(#606060, #8b8b8b 20%, #606060);
}

.quick-access {
  width: 232px;
  display: flex;
  align-items: center;
  padding: 0 4px;
}

.tool {
  width: 24px;
  display: flex;
  justify-content: center;
}

.tool.wide {
  width: 30px;
}

.workspace {
  width: 179px;
  margin: 2px 0;
  padding: 0 3px;
  display: flex;
  align-items: center;
  gap: 3px;
  background: linear-gradient(#cacaca, #adadad);
  color: #666;
}

.bar-button {
  width: 15px;
  display: flex;
  align-items: center;
  justify-content: center;
  background: linear-gradient(#6c6c6c, #9b9b9b 30%, #777);
}

.bar-button svg {
  width: 10px;
  height: 10px;
}

.doc-title {
  flex: 1;
  background: #fdfdfd;
  color: #111;
  text-align: center;
  padding-left: 18px;
  line-height: 24px;
}

.search {
  width: 178px;
  background: #f7f7f7;
  margin: 2px 1px 1px 0;
  padding: 2px 2px 0;
  font-style: italic;
}

.search::placeholder {
  color: #777;
}

.account {
  width: 252px;
  display: flex;
  align-items: center;
  padding-right: 5px;
}

.user {
  display: flex;
  align-items: center;
  gap: 6px;
  color: #f4f4f4;
  flex: 1;
  padding-left: 2px;
}

.account .tool:first-child {
  width: 26px;
}

.divider {
  width: 1px;
  height: 14px;
  margin: 0 6px 0 9px;
  background: #999;
}

.window-area {
  width: 122px;
  padding: 0 4px 0 16px;
  background: #fff;
}

.window-buttons {
  display: flex;
  height: 18px;
  border: 1px solid #b5b5b5;
  border-top: 0;
  border-radius: 0 0 4px 4px;
}

.window-buttons button {
  flex: 3;
  display: flex;
  align-items: center;
  justify-content: center;
  border-left: 1px solid #ccc;
}

.window-buttons button:first-child {
  border-left: 0;
}

.window-buttons .close {
  flex: 5;
}

.window-buttons svg {
  width: 14px;
  height: 14px;
}

.tabs {
  display: flex;
  align-items: stretch;
  padding-left: 4px;
  color: #f2f2f2;
  line-height: 21px;
}

.tabs a {
  padding: 0 9px;
}

.tabs .active {
  margin-top: 3px;
  line-height: 16px;
  color: #222;
  background: linear-gradient(#d6d6d6, #fafafa);
  border-radius: 2px 2px 0 0;
}

.ribbon-toggle {
  display: flex;
  align-items: center;
  gap: 5px;
  margin-left: 14px;
}

.pill {
  padding: 2px 3px 3px;
  border-radius: 2px;
  background: #e2e2e2;
}

.pill .caret {
  display: block;
}

/* ribbon */
.ribbon {
  display: grid;
  grid-template-columns: 226fr 250fr 214fr 86fr 80fr 162fr 69fr 97fr 79fr 17fr;
  height: 106px;
  border-bottom: 7px solid #5f5f5f;
  background: #fcfcfc;
}

.panel {
  display: flex;
  flex-direction: column;
  min-width: 0;
  border-right: 1px solid #9f9f9f;
  padding: 0 1px;
}

.panel-body {
  flex: 1;
  display: flex;
  justify-content: space-between;
  padding: 6px 1px 0;
}

.panel h2 {
  height: 18px;
  margin-bottom: 1px;
  padding-bottom: 2px;
  display: flex;
  align-items: center;
  justify-content: center;
  gap: 6px;
  background: #ebebeb;
  border-top: 1px solid #dcdcdc;
  white-space: nowrap;
}

.with-launcher span {
  flex: 1;
  display: flex;
  align-items: center;
  justify-content: center;
  gap: 6px;
}

.launcher {
  width: 8px;
  height: 8px;
}

.ribbon-end {
  background: linear-gradient(90deg, #8e8e8e, #b5b5b5);
}

.big {
  flex: 1 1 auto;
  display: flex;
  flex-direction: column;
  align-items: center;
  align-self: flex-start;
}

.big svg {
  width: 32px;
  height: 32px;
  margin: 1px 0 4px;
}

.big .caret {
  margin-top: 2px;
}

.letter {
  height: 37px;
  font: 500 40px/37px Roboto, sans-serif;
  color: #444;
}

.small-col {
  display: grid;
  grid-auto-rows: 22px;
  align-content: start;
  justify-items: start;
  gap: 2px;
}

.small {
  width: 24px;
  height: 22px;
  display: flex;
  align-items: center;
  justify-content: center;
  border: 1px solid #c6c6c6;
  background: linear-gradient(#fbfbfb, #ececec);
}

.small svg {
  width: 18px;
  height: 18px;
}

.small.split {
  width: 36px;
  justify-content: space-between;
  padding: 0 3px 0 2px;
}

.small.on {
  background: #9cc7f3;
  border-color: #3c7cc4;
}

.draw {
  display: grid;
  grid-template-columns: 40fr 46fr 54fr 40fr 36px;
  padding: 6px 6px 0 2px;
}

.modify {
  display: grid;
  grid-template-columns: 71fr 71fr 71fr 24px;
  grid-auto-rows: 22px;
  gap: 2px 0;
  padding: 6px 5px 0 5px;
}

.row-tool {
  display: flex;
  align-items: center;
  gap: 12px;
  padding-left: 1px;
}

.row-tool.menu {
  gap: 6px;
}

.row-tool .caret {
  margin-left: auto;
  margin-right: 8px;
}

.stack {
  flex-direction: column;
  justify-content: flex-start;
  gap: 2px;
}

.button-row {
  display: flex;
  justify-content: space-between;
}

.pair {
  display: flex;
}

.pair .small + .small {
  border-left: 0;
}

.combo {
  flex: 1;
  min-width: 0;
  height: 22px;
  display: flex;
  align-items: center;
  padding: 0 2px;
  border: 1px solid #cacaca;
  background: linear-gradient(#fcfcfc, #ececec);
}

.combo.layer {
  gap: 3px;
  padding-left: 3px;
}

.stack > .combo {
  flex: none;
}

.swatch {
  width: 14px;
  height: 14px;
  margin: 0 1px;
  border: 1px solid #000;
  background: #fff;
}

.swatch.large {
  width: 16px;
  height: 16px;
}

.sample {
  flex: none;
  width: 65px;
  height: 1px;
  margin-right: 2px;
  background: #111;
}

.sample.inset {
  width: 59px;
  margin-left: 6px;
}

.prop {
  display: flex;
  align-items: center;
  gap: 2px;
}

.prop > svg {
  margin-left: 2px;
}

/* drawing area */
.workarea {
  flex: 1;
  min-height: 0;
  display: flex;
  border-left: 2px solid #8a8a8a;
}

.viewport {
  flex: 1;
  min-width: 0;
  position: relative;
  overflow: hidden;
  background: var(--canvas);
}

.drawing {
  width: 100%;
  height: 100%;
}

.geometry, .ucs {
  fill: none;
  stroke: #f4f4f4;
}

.track {
  stroke-dasharray: 4 3;
}

.green {
  stroke: #8fb89b;
}

.pink {
  stroke: #c08ab8;
}

.crosshair {
  stroke: #fff;
}

.angles {
  font-family: 'Liberation Sans', Arial, sans-serif;
  font-size: 42px;
  fill: #fff;
  stroke: #fff;
  stroke-width: .5px;
}

.view-label {
  position: absolute;
  left: 4px;
  top: 5px;
  color: #eee;
}

.doc-buttons {
  position: absolute;
  right: 9px;
  top: 8px;
  display: flex;
  gap: 8px;
}

.doc-buttons svg {
  width: 12px;
  height: 12px;
}

.viewcube {
  position: absolute;
  right: 11px;
  top: 31px;
  width: 100px;
  height: 140px;
  font: bold 15px 'Liberation Sans', Arial, sans-serif;
  text-anchor: middle;
  fill: #b4b6b8;
}

.viewcube .face {
  font-size: 10px;
  fill: #444;
}

.viewcube .wcs {
  font-size: 11px;
  font-weight: normal;
  text-anchor: start;
  fill: #4a4d52;
}

.navbar {
  position: absolute;
  right: 3px;
  top: 192px;
  width: 32px;
  height: 250px;
}

.tooltip {
  position: absolute;
  left: 724px;
  top: 362px;
  padding: 1px 7px 1px 4px;
  border: 1px solid #000;
  background: #999;
  color: #111;
  font-size: 11px;
}

/* command line */
.command {
  position: absolute;
  left: 257px;
  right: 239px;
  bottom: 0;
}

.history {
  margin-left: 57px;
  display: flex;
  flex-direction: column;
  align-items: flex-start;
  gap: 1px;
  font: 12px/15px var(--mono);
  color: #fff;
}

.history p {
  padding: 0 2px;
  border-radius: 2px;
  background: #555759;
}

.history p:nth-child(1) {
  color: #aaa;
  background: #45484c;
}

.history p:nth-child(2) {
  color: #ccc;
  background: #4c4e51;
}

.command-bar {
  display: flex;
  align-items: center;
  gap: 4px;
  height: 27px;
  padding-right: 4px;
  border-bottom: 1px solid #777;
  background: #fff;
}

.command-tools {
  align-self: stretch;
  display: flex;
  align-items: center;
  gap: 8px;
  width: 55px;
  padding: 0 4px;
  background: linear-gradient(#7c7c7c, #4c4c4c);
}

.command-tools svg {
  width: 12px;
  height: 12px;
}

.command-tools .wrench {
  width: 14px;
  height: 14px;
}

.grip {
  width: 6px;
  height: 18px;
  background: radial-gradient(circle, #ccc 1px, transparent 1px) 0 0 / 3px 3px;
}

.prompt {
  flex: 1;
  padding-left: 2px;
  font: 12px/16px var(--mono);
  color: #111;
  white-space: nowrap;
}

.prompt a {
  padding: 1px 0;
  border-radius: 2px;
  background: #d2d2d4;
}

.prompt em {
  font-style: normal;
  color: #1a1ac8;
}

/* scroll bars */
.vscroll {
  width: 19px;
  display: flex;
  flex-direction: column;
  align-items: center;
  justify-content: space-between;
  padding: 7px 2px 6px 0;
  background: #ececec;
  border-left: 1px solid #f8f8f8;
}

.thumb {
  width: 14px;
  height: 14px;
  border: 1px solid #999;
  background: linear-gradient(#fdfdfd, #cfcfcf);
}

.vscroll .thumb {
  margin-top: 155px;
}

.layout-row {
  height: 18px;
  display: flex;
  align-items: stretch;
  padding-left: 2px;
  background: #efefef;
  border-bottom: 1px solid #333;
  font-family: 'Liberation Sans', Arial, sans-serif;
  font-size: 11px;
  color: #111;
}

.tab-nav {
  display: flex;
}

.tab-nav button {
  width: 15px;
  display: flex;
  align-items: center;
  justify-content: center;
  border-right: 1px solid #aaa;
}

.tab-nav svg {
  width: 11px;
  height: 11px;
  fill: #555;
}

.layout-tab {
  padding: 1px 4px 0 7px;
}

.layout-tab.current {
  padding: 1px 10px 0 12px;
  background: var(--canvas);
  color: #eee;
  clip-path: polygon(0 0, 100% 0, calc(100% - 4px) 15px, 5px 15px);
}

.slash {
  width: 10px;
  height: 18px;
}

.hscroll {
  width: 448px;
  margin-left: auto;
  padding: 2px 18px 2px 0;
  display: flex;
  align-items: center;
}

.hscroll .handle {
  width: 4px;
  height: 12px;
  margin-right: 8px;
  border: 1px solid #999;
}

.hscroll .thumb {
  margin-left: 69px;
}

.hscroll .right {
  margin-left: auto;
}

/* status bar */
.status {
  height: 23px;
  display: flex;
  align-items: stretch;
  border-bottom: 2px solid #444;
  background: linear-gradient(#a2a2a2, #767676);
  font-family: 'Liberation Sans', Arial, sans-serif;
  font-size: 11px;
  color: #111;
}

.coords {
  width: 171px;
  padding: 4px 0 0 12px;
}

.toggles {
  display: flex;
  border-left: 1px solid #555;
}

.toggles button {
  width: 22px;
  display: flex;
  align-items: center;
  justify-content: center;
  border-right: 1px solid #555;
  background: linear-gradient(#c4c4c4, #969696);
}

.toggles button.on {
  background: linear-gradient(#dff0f8, #8fc6dd);
}

.toggles svg {
  width: 18px;
  height: 18px;
}

.toggles .text {
  width: auto;
  padding: 0 2px;
}

.toggles .scale {
  width: 50px;
  gap: 2px;
}

.toggles .dim svg {
  opacity: .4;
}

.end {
  margin-left: auto;
  padding-right: 2px;
}

.end > .caret {
  align-self: center;
  margin: 0 3px;
}

.gap {
  width: 12px;
  border-right: 1px solid #444;
  background: #777;
}

.gap.thin {
  width: 5px;
}

.tray {
  display: flex;
  align-items: center;
  gap: 3px;
  padding: 0 7px 0 3px;
  border: 1px solid #333;
  background: #999;
}

.toggles .clean {
  border-left: 1px solid #555;
}

/* logo grid over the lower right corner */
.watermark {
  position: absolute;
  right: 0;
  bottom: 17px;
  width: 62px;
  height: 44px;
  pointer-events: none;
}
```
